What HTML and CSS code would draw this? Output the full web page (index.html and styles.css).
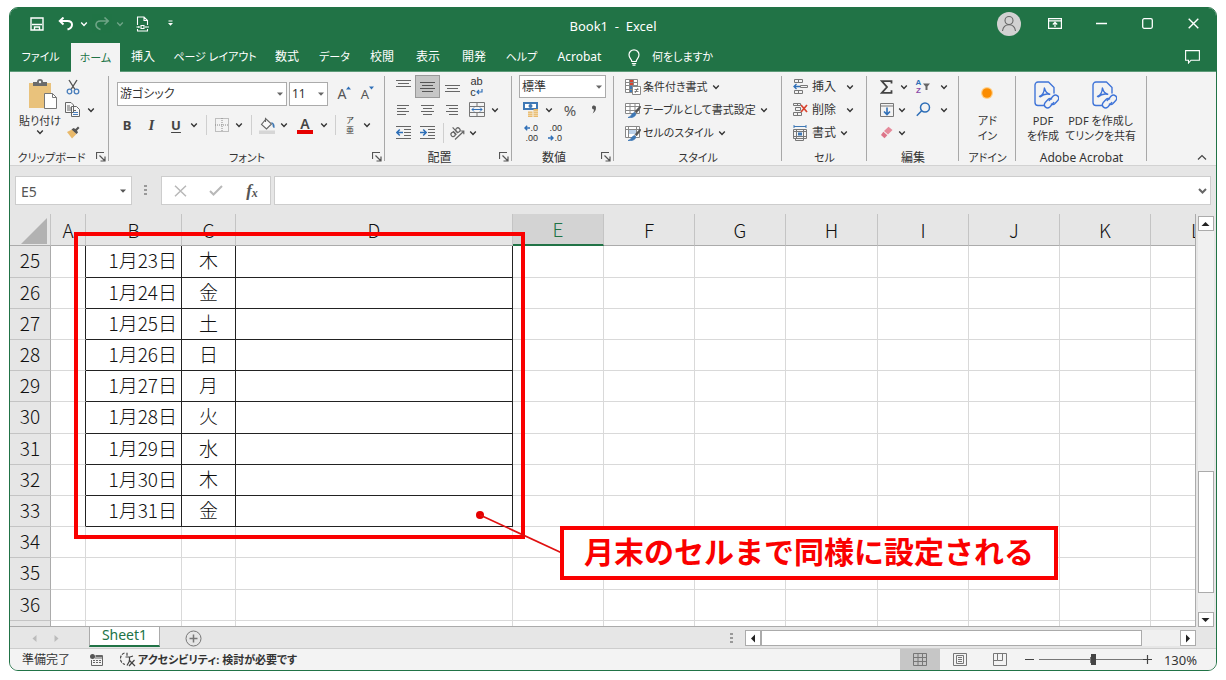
FILE: index.html
```html
<!DOCTYPE html>
<html lang="ja">
<head>
<meta charset="utf-8">
<meta name="viewport" content="width=device-width, initial-scale=1">
<title>Book1 - Excel</title>
<link rel="stylesheet" href="styles.css">
</head>
<body>
<svg class="sprite" aria-hidden="true">
  <symbol id="chev" viewBox="0 0 8 8"><path d="M1.2 2.6 4 5.4 6.8 2.6" fill="none" stroke="currentColor" stroke-width="1.4"/></symbol>
  <symbol id="tri" viewBox="0 0 8 8"><path d="M1 2.5h6L4 5.8z" fill="currentColor"/></symbol>
  <symbol id="launch" viewBox="0 0 10 10"><path d="M.5 7V.5H8M3.5 3.5l5 5M9 4.5V9H4.5" fill="none" stroke="#555" stroke-width="1.2"/></symbol>
  <symbol id="pdf" viewBox="0 0 26 30"><g fill="none" stroke="#3f74d8" stroke-width="1.400" stroke-linecap="round" stroke-linejoin="round"><path d="M9.500 24.500H4a3 3 0 0 1-3-3V4a3 3 0 0 1 3-3h10.500l5.500 5.500V12"/><path d="M5.500 15.500c3-1.200 4.700-4.500 4.900-8.500 1 3.800 3 5.700 5.300 6.200-3.500-.7-7 .3-9.200 2.500"/><path d="m15.200 19.500 4-4.500a3.200 3.200 0 0 1 4.800 4.200l-3 3.300a3.200 3.200 0 0 1-3.600.6"/><path d="m19.800 21.500-4 4.500a3.200 3.200 0 0 1-4.800-4.200l3-3.300a3.200 3.200 0 0 1 3.600-.6"/></g></symbol>
</svg>

<main class="window">
  <header class="titlebar">
    <div class="quick">
      <button aria-label="上書き保存"><svg width="14" height="14" viewBox="0 0 14 14" fill="none" stroke="#fff" stroke-width="1.400"><path d="M1 1h12v12H1zM2 7.500h10M4.500 13v-3h5v3"/></svg></button>
      <button aria-label="元に戻す"><svg width="16" height="14" viewBox="0 0 16 14" fill="none" stroke="#fff" stroke-width="2"><path d="M5.500 .5 1.800 4 5.500 7.500M2 4h7.500c3 0 4.500 1.500 4.500 3.700 0 2-1.500 3.800-4.500 4.800"/></svg></button>
      <button aria-label="元に戻す一覧"><svg class="chev"><use href="#chev"/></svg></button>
      <button class="faded" aria-label="やり直し"><svg width="16" height="14" viewBox="0 0 16 14" fill="none" stroke="#fff" stroke-width="1.600"><path d="m10.500 .5 3.700 3.500-3.700 3.500M14 4H6.500C3.500 4 2 5.500 2 7.700c0 2 1.500 3.800 4.500 4.800"/></svg></button>
      <button class="faded" aria-label="やり直し一覧"><svg class="chev"><use href="#chev"/></svg></button>
      <button class="q-wide" aria-label="PDF"><svg width="13" height="16" viewBox="0 0 13 16" fill="none" stroke="#fff" stroke-width="1.100"><path d="M1.500 9V1h6.500l3.500 3.500V9M8 1v3.500h3.500M1.500 13v2h10v-2M5 9.500h3v3H5zM.5 11h2M3 10v2M10 10v2M11 11h2"/></svg></button>
      <button class="q-more" aria-label="クイック アクセス ツール バーの設定"><svg width="7" height="7" viewBox="0 0 7 7"><path d="M1.500 1h4" stroke="#fff"/><path d="M1 3h5L3.500 5.800z" fill="#fff"/></svg></button>
    </div>
    <h1 class="doc-title">Book1&nbsp; -&nbsp; Excel</h1>
    <div class="win-buttons">
      <button class="avatar" aria-label="アカウント"><svg width="24" height="24" viewBox="0 0 24 24"><circle cx="12" cy="12" r="12" fill="#d2d2d2"/><g fill="none" stroke="#666" stroke-width="1.100"><circle cx="12" cy="8.500" r="4"/><path d="M5.500 19c.5-4 3-6.300 6.500-6.300s6 2.300 6.500 6.300"/></g></svg></button>
      <button aria-label="リボンの表示オプション"><svg width="14" height="11" viewBox="0 0 14 11" fill="none" stroke="#fff" stroke-width="1.200"><path d="M.6.6h12.800v9.800H.6zM.6 2.800h12.800M7 9V4.500M4.800 6.500 7 4.400l2.200 2.100"/></svg></button>
      <button aria-label="最小化"><svg width="11" height="11" viewBox="0 0 11 11"><path d="M0 5.500h11" stroke="#fff" stroke-width="1.300"/></svg></button>
      <button aria-label="最大化"><svg width="11" height="11" viewBox="0 0 11 11"><rect x=".7" y=".7" width="9.600" height="9.600" rx="1.500" fill="none" stroke="#fff" stroke-width="1.300"/></svg></button>
      <button aria-label="閉じる"><svg width="11" height="11" viewBox="0 0 11 11"><path d="m.7.7 9.600 9.600M10.300.7.700 10.300" stroke="#fff" stroke-width="1.400"/></svg></button>
    </div>
  </header>

  <nav class="tabs" aria-label="リボン">
    <button class="tab tab-file">ファイル</button>
    <button class="tab tab-mid active">ホーム</button>
    <button class="tab">挿入</button>
    <button class="tab tab-layout">ページ レイアウト</button>
    <button class="tab">数式</button>
    <button class="tab tab-mid">データ</button>
    <button class="tab">校閲</button>
    <button class="tab">表示</button>
    <button class="tab">開発</button>
    <button class="tab tab-mid">ヘルプ</button>
    <button class="tab tab-acro">Acrobat</button>
    <button class="tell"><svg width="12" height="17" viewBox="0 0 12 17" fill="none" stroke="#fff" stroke-width="1.200"><path d="M3.800 12.500C3.800 10 1 9.500 1 5.800a5 5 0 0 1 10 0c0 3.700-2.800 4.200-2.800 6.700zM3.800 14.500h4.400M4.500 16.200h3"/></svg>何をしますか</button>
    <button class="comment" aria-label="コメント"><svg width="15" height="14" viewBox="0 0 15 14" fill="none" stroke="#fff" stroke-width="1.100"><path d="M.6.6h13.800v9.600H6L3.500 13v-2.800H.6z"/></svg></button>
  </nav>

  <section class="ribbon">
    <div class="group g-clip">
      <div class="body">
        <button class="big paste">
          <svg width="30" height="31" viewBox="0 0 30 31"><path d="M1 4h22v25H1z" fill="#e9c27c"/><path d="M5 3h4a3 3 0 0 1 6 0h4v4H5z" fill="#6b6b6b"/><circle cx="12" cy="3" r="1.200" fill="#f3f3f3"/><path d="M16.500 14.500h8l4 4v11h-12z" fill="#fff" stroke="#777"/><path d="M24.500 14.500v4h4" fill="none" stroke="#777"/></svg>
          <span>貼り付け</span><svg class="chev"><use href="#chev"/></svg>
        </button>
        <div class="stack">
          <button aria-label="切り取り"><svg width="14" height="16" viewBox="0 0 14 16" fill="none"><path d="M3 1l6 9.500M11 1 5 10.500" stroke="#555" stroke-width="1.400"/><circle cx="3.500" cy="12.500" r="2.300" stroke="#4a7ebb" stroke-width="1.300"/><circle cx="10.500" cy="12.500" r="2.300" stroke="#4a7ebb" stroke-width="1.300"/></svg></button>
          <div class="copy"><button aria-label="コピー"><svg width="15" height="15" viewBox="0 0 15 15" fill="#f8f8f8" stroke="#666"><path d="M.5.5H6L8.500 3v7.500h-8zM6.500 4.500h5l3 3v7h-8z"/><path d="M2 4h3M2 6h4M2 8h4M8 8.500h3" fill="none"/><path d="M8 10.500h5M8 12.500h5" stroke="#4a7ebb" fill="none"/></svg></button><button aria-label="コピーのオプション"><svg class="chev"><use href="#chev"/></svg></button></div>
          <button aria-label="書式のコピー"><svg width="14" height="13" viewBox="0 0 14 13"><path d="m1 6 5-2.500 4.500 4.500L6 12.500z" fill="#e9b96a"/><path d="m5.500 3.500 2-1.500 2 1L12 .5l1.500 1.500L11 4.500l1 2-1.500 1.500z" fill="#555"/></svg></button>
        </div>
      </div>
      <div class="label">クリップボード<button class="launch" aria-label="クリップボードの設定"><svg width="10" height="10"><use href="#launch"/></svg></button></div>
    </div>

    <div class="group g-font">
      <div class="body font-body">
        <div class="font-top">
          <span class="combo combo-font"><select aria-label="フォント名"><option>游ゴシック</option></select><svg class="chev"><use href="#tri"/></svg></span>
          <span class="combo combo-size"><select aria-label="フォント サイズ"><option>11</option></select><svg class="chev"><use href="#tri"/></svg></span>
          <button class="asize" aria-label="フォント サイズの拡大">A<svg width="5" height="4" viewBox="0 0 5 4"><path d="m0 3.500 2.500-3 2.500 3z" fill="#2f6fb7"/></svg></button>
          <button class="asize small" aria-label="フォント サイズの縮小">A<svg width="5" height="4" viewBox="0 0 5 4"><path d="m0 .5 2.500 3 2.500-3z" fill="#2f6fb7"/></svg></button>
        </div>
        <div class="font-row">
          <button class="b">B</button><button class="i">I</button><button class="u">U</button><button aria-label="下線の種類"><svg class="chev"><use href="#chev"/></svg></button>
          <i class="vsep"></i>
          <button aria-label="罫線"><svg width="14" height="14" viewBox="0 0 14 14" fill="none" stroke="#888" stroke-dasharray="1 1"><path d="M.5.5h13v13H.5zM7 0v14M0 7h14"/></svg></button><button aria-label="罫線の種類"><svg class="chev"><use href="#chev"/></svg></button>
          <i class="vsep"></i>
          <button aria-label="塗りつぶしの色"><svg width="17" height="17" viewBox="0 0 17 17"><path d="m7 2 5.500 5L7.500 12 2.500 7.500zM6.500 5V.8" fill="#fafafa" stroke="#666" stroke-width="1.100"/><path d="M12 5c3 .5 4 2.500 3.500 6-1.500 0-2-1.500-2-3.500z" fill="#3f78b5"/><path d="M0 13.500h16V17H0z" fill="#d6d6d6"/></svg></button><button aria-label="塗りつぶしの色の選択"><svg class="chev"><use href="#chev"/></svg></button>
          <button class="fcolor">A</button><button aria-label="フォントの色の選択"><svg class="chev"><use href="#chev"/></svg></button>
          <i class="vsep"></i>
          <button class="ruby" aria-label="ふりがな"><span>ア</span><span>亜</span></button><button aria-label="ふりがなの設定"><svg class="chev"><use href="#chev"/></svg></button>
        </div>
      </div>
      <div class="label">フォント<button class="launch" aria-label="フォントの設定"><svg width="10" height="10"><use href="#launch"/></svg></button></div>
    </div>

    <div class="group g-align">
      <div class="body rows">
        <div class="arow">
          <button aria-label="上揃え"><svg width="15" height="14" viewBox="0 0 15 14" stroke="#666"><path d="M0 .5h15M2 3.500h11M0 6.500h15"/></svg></button>
          <button class="on" aria-label="上下中央揃え"><svg width="15" height="14" viewBox="0 0 15 14" stroke="#555"><path d="M0 2.500h15M2 5.500h11M0 8.500h15M2 11.500h11"/></svg></button>
          <button aria-label="下揃え"><svg width="15" height="14" viewBox="0 0 15 14" stroke="#666"><path d="M0 5.500h15M2 8.500h11M0 11.500h15"/></svg></button>
          <button class="wrap" aria-label="折り返して全体を表示"><span>ab</span><span>c<svg width="7" height="8" viewBox="0 0 7 8" fill="none" stroke="#2f6fb7" stroke-width="1.200"><path d="M6 2v3H1M3 3 1 5l2 2"/></svg></span></button>
        </div>
        <div class="arow">
          <button aria-label="左揃え"><svg width="12" height="11" viewBox="0 0 12 11" stroke="#666"><path d="M0 1.500h12M0 4.500h9M0 7.500h12M0 10.500h9"/></svg></button>
          <button aria-label="中央揃え"><svg width="13" height="11" viewBox="0 0 13 11" stroke="#666"><path d="M0 1.500h13M2 4.500h9M0 7.500h13M2 10.500h9"/></svg></button>
          <button aria-label="右揃え"><svg width="12" height="11" viewBox="0 0 12 11" stroke="#666"><path d="M0 1.500h12M3 4.500h9M0 7.500h12M3 10.500h9"/></svg></button>
          <button aria-label="セルを結合して中央揃え"><svg width="16" height="15" viewBox="0 0 16 15" fill="none" stroke="#777"><path d="M.5.500h15v14H.5zM.5 4.500h15M.5 10.500h15M8 .5v4M8 10.500v4"/><path d="M3 7.500h10M5 5.500l-2 2 2 2M11 5.500l2 2-2 2" stroke="#2f6fb7"/></svg></button>
          <button aria-label="結合の種類"><svg class="chev"><use href="#chev"/></svg></button>
        </div>
        <div class="arow indent">
          <button aria-label="インデントを減らす"><svg width="15" height="13" viewBox="0 0 15 13" stroke="#666" fill="none"><path d="M0 .5h15M8 3.500h7M8 6.500h7M8 9.500h7M0 12.500h15"/><path d="M7 6.500H1M3.800 3.500l-3 3 3 3" stroke="#2f6fb7" stroke-width="1.500"/></svg></button>
          <button aria-label="インデントを増やす"><svg width="15" height="13" viewBox="0 0 15 13" stroke="#666" fill="none"><path d="M0 .5h15M8 3.500h7M8 6.500h7M8 9.500h7M0 12.500h15"/><path d="M0 6.500h6M3.200 3.500l3 3-3 3" stroke="#2f6fb7" stroke-width="1.500"/></svg></button>
          <i class="vsep"></i>
          <button aria-label="方向"><svg width="16" height="14" viewBox="0 0 16 14" fill="none" stroke="#666" stroke-width="1.200"><g transform="rotate(-42 6 6)"><ellipse cx="3" cy="6.500" rx="2.100" ry="2.200"/><path d="M5.200 4v5M7.300 1v7.800"/><ellipse cx="9.500" cy="6.500" rx="2.100" ry="2.200"/></g><path d="M6 13.500 14.500 5.500M11.500 5h3.300v3.300"/></svg></button>
          <button aria-label="方向の種類"><svg class="chev"><use href="#chev"/></svg></button>
        </div>
      </div>
      <div class="label">配置<button class="launch" aria-label="配置の設定"><svg width="10" height="10"><use href="#launch"/></svg></button></div>
    </div>

    <div class="group g-num">
      <div class="body rows">
        <span class="combo combo-num"><select aria-label="数値の書式"><option>標準</option></select><svg class="chev"><use href="#tri"/></svg></span>
        <div class="nrow">
          <button aria-label="通貨表示形式"><svg width="16" height="15" viewBox="0 0 16 15"><path d="M0 0h15v8H0z" fill="#3f78b5"/><path d="M2 2h11v4H2z" fill="#fff"/><circle cx="7.500" cy="4" r="2" fill="#3f78b5"/><g fill="#e9b96a"><path d="M5 9.500h4.500V15H5zM10.500 7H15v8h-4.500z"/></g><path d="M5 11.300h10M5 13.300h10M10.500 9.300H15" stroke="#f6e6c8" stroke-width=".8"/></svg></button>
          <button aria-label="通貨の種類"><svg class="chev"><use href="#chev"/></svg></button>
          <button class="pct">%</button><button class="comma" aria-label="桁区切りスタイル"><svg width="6" height="9" viewBox="0 0 6 9"><path d="M1 2.500C1 1 2 .5 3 .5s2 .8 2 2.200C5 5.500 3.500 7.500 1.500 8.500c1-1.500 1.400-2.500 1.400-4C1.800 4.500 1 3.800 1 2.500z" fill="#555"/></svg></button>
        </div>
        <div class="nrow">
          <button class="dec" aria-label="小数点以下の表示桁数を増やす"><span><svg width="6" height="6" viewBox="0 0 6 6" fill="none" stroke="#2f6fb7" stroke-width="1.400"><path d="M6 3H1M3.200.8 1 3l2.200 2.200"/></svg>.0</span><span>.00</span></button>
          <button class="dec second" aria-label="小数点以下の表示桁数を減らす"><span>.00</span><span><svg width="6" height="6" viewBox="0 0 6 6" fill="none" stroke="#2f6fb7" stroke-width="1.400"><path d="M0 3h5M2.800.8 5 3 2.800 5.200"/></svg>.0</span></button>
        </div>
      </div>
      <div class="label">数値<button class="launch" aria-label="数値の設定"><svg width="10" height="10"><use href="#launch"/></svg></button></div>
    </div>

    <div class="group g-style">
      <div class="body rows">
        <button class="cmd"><svg width="16" height="16" viewBox="0 0 16 16" fill="none" stroke="#888"><path d="M.5.5h12v13H.5z" fill="#fff"/><path d="M4.500.5v13M8.500.5v13M.5 3.500h12M.5 6.500h12M.5 10.500h12"/><path d="M5 1h3v2H5zM5 4h3v2H5z" fill="#d8432f" stroke="none"/><path d="M5 7h3v3H5zM5 11h2v2H5z" fill="#3f78b5" stroke="none"/><path d="M7.500 7.500h8v8h-8z" fill="#fff"/><path d="M9.500 10.500h4M9.500 12.500h4M13 9l-3 5" stroke="#666" stroke-width=".8"/></svg><span>条件付き書式</span><svg class="chev"><use href="#chev"/></svg></button>
        <button class="cmd"><svg width="16" height="16" viewBox="0 0 16 16" fill="none" stroke="#888"><path d="M.5 1.500h14v10H.5z" fill="#fff"/><path d="M.5 4.500h14M.5 8.500h14M5 1.500v10M10 1.500v10"/><path d="M10 9.500 15 4l1 1-4.500 6z" fill="#555" stroke="#555" stroke-width=".6"/><path d="M3 15.500c3 0 3-4 6.500-5l1.500 1.500c-1 3-4 4-8 3.500z" fill="#3f78b5" stroke="#3f78b5" stroke-width=".8"/></svg><span>テーブルとして書式設定</span><svg class="chev"><use href="#chev"/></svg></button>
        <button class="cmd"><svg width="16" height="16" viewBox="0 0 16 16" fill="none" stroke="#888"><path d="M.5 1.500h14v11H.5z" fill="#fff"/><path d="M4 5h7v4H4z" fill="#bcd2ea" stroke="none"/><path d="M.5 4.500h14M3.500 1.500v11M11.500 1.500v7"/><path d="M10 9.500 15 4l1 1-4.500 6z" fill="#555" stroke="#555" stroke-width=".6"/><path d="M3 15.500c3 0 3-4 6.500-5l1.500 1.500c-1 3-4 4-8 3.500z" fill="#3f78b5" stroke="#3f78b5" stroke-width=".8"/></svg><span>セルのスタイル</span><svg class="chev"><use href="#chev"/></svg></button>
      </div>
      <div class="label">スタイル</div>
    </div>

    <div class="group g-cell">
      <div class="body rows">
        <button class="cmd wide"><svg width="15" height="15" viewBox="0 0 15 15" fill="none" stroke="#777"><path d="M1.500.5h8v3h-8zM5.500.5v3M1.500 11.500h8v3h-8zM5.500 11.500v3M7.500 6.500h7v2h-7z"/><path d="M7 7.500H1M3.500 5 1 7.500 3.500 10" stroke="#2f6fb7" stroke-width="1.300"/></svg><span>挿入</span><svg class="chev"><use href="#chev"/></svg></button>
        <button class="cmd wide"><svg width="15" height="15" viewBox="0 0 15 15" fill="none" stroke="#777"><path d="M.5 1.500h7v2h-7zM4.500 1.500v2M2.500 5.500h5v3h-5zM.5 10.500h8v3h-8zM4.500 10.500v3"/><path d="m8 3 6 7M14 3l-6 7" stroke="#d8432f" stroke-width="1.700"/></svg><span>削除</span><svg class="chev"><use href="#chev"/></svg></button>
        <button class="cmd"><svg width="15" height="16" viewBox="0 0 15 16" fill="none" stroke="#777"><path d="M.5 4.500h13v9H.5zM3.500 4.500v9M10.500 4.500v9M.5 6.500h13M.5 11.500h13M2.500 13.500v2h8v-2"/><path d="M5 7.500h4v3H5z" fill="#3f78b5" stroke="none"/><path d="M1 1.500h12M1 0v3M13 0v3" stroke="#3f78b5"/></svg><span>書式</span><svg class="chev"><use href="#chev"/></svg></button>
      </div>
      <div class="label">セル</div>
    </div>

    <div class="group g-edit">
      <div class="body rows">
        <div class="erow"><button aria-label="合計"><svg width="13" height="14" viewBox="0 0 13 14" fill="none" stroke="#444" stroke-width="1.800"><path d="M11.500 3.500V1.200H1.800L7 7l-5.200 5.800h9.700v-2.500"/></svg></button><button class="far" aria-label="集計方法"><svg class="chev"><use href="#chev"/></svg></button><button class="sort" aria-label="並べ替えとフィルター"><span class="az"><span>A</span><span>Z</span></span><svg width="7" height="7" viewBox="0 0 7 7"><path d="M0 .5h7L4.500 3.500V7h-2V3.500z" fill="#666"/></svg></button><button aria-label="並べ替えの種類"><svg class="chev"><use href="#chev"/></svg></button></div>
        <div class="erow"><button aria-label="フィル"><svg width="14" height="14" viewBox="0 0 14 14" fill="none"><path d="M.5.500h13v13H.5zM.5 3h13" stroke="#777"/><path d="M7 4.500v7M4 8.500l3 3 3-3" stroke="#2f6fb7" stroke-width="1.600"/></svg></button><button aria-label="フィルの種類"><svg class="chev"><use href="#chev"/></svg></button><button class="find" aria-label="検索と選択"><svg width="15" height="15" viewBox="0 0 15 15" fill="none" stroke="#2f6fb7" stroke-width="1.500"><circle cx="9" cy="5.500" r="4.500"/><path d="M5.700 8.800.8 13.800"/></svg></button><button aria-label="検索の種類"><svg class="chev"><use href="#chev"/></svg></button></div>
        <div class="erow"><button aria-label="クリア"><svg width="13" height="13" viewBox="0 0 13 13"><path d="m4 5 4.500-4.300L12.500 4 8 8.500z" fill="#e58a9a"/><path d="M3.300 5.700 7.300 9.200 4.500 12.200 1 9z" fill="#dd7488"/></svg></button><button aria-label="クリアの種類"><svg class="chev"><use href="#chev"/></svg></button></div>
      </div>
      <div class="label">編集</div>
    </div>

    <div class="group g-addin">
      <div class="body"><button class="big"><svg width="34" height="31" viewBox="0 0 34 31"><circle cx="16" cy="14" r="6" fill="#ffd08a"/><circle cx="16" cy="14" r="4.800" fill="#fb8c00"/></svg><span>アド<br>イン</span></button></div>
      <div class="label">アドイン</div>
    </div>

    <div class="group g-acro">
      <div class="body">
        <button class="big"><svg width="26" height="31" viewBox="-1 -2 26 31"><use href="#pdf" width="26" height="30"/></svg><span>PDF<br>を作成</span></button>
        <button class="big"><svg width="26" height="31" viewBox="-1 -2 26 31"><use href="#pdf" width="26" height="30"/></svg><span>PDF を作成し<br>てリンクを共有</span></button>
      </div>
      <div class="label">Adobe Acrobat</div>
    </div>
    <button class="collapse" aria-label="リボンを折りたたむ"><svg width="10" height="7" viewBox="0 0 10 7"><path d="m1 5.500 4-4 4 4" fill="none" stroke="#444" stroke-width="1.200"/></svg></button>
  </section>

  <section class="formula">
    <span class="namebox"><input aria-label="名前ボックス" value="E5"><svg class="chev"><use href="#tri"/></svg></span>
    <i class="dots"></i>
    <span class="fx">
      <button aria-label="キャンセル"><svg width="13" height="12" viewBox="0 0 13 12"><path d="m1 .8 11 10.400M12 .8 1 11.200" stroke="#b8b8b8" stroke-width="1.500"/></svg></button>
      <button aria-label="入力"><svg width="14" height="11" viewBox="0 0 14 11"><path d="m1 6 3.500 3.500L13 1" fill="none" stroke="#b8b8b8" stroke-width="2"/></svg></button>
      <button class="fxb" aria-label="関数の挿入">f<small>x</small></button>
    </span>
    <span class="finput"><input aria-label="数式バー"><svg width="9" height="8" viewBox="0 0 9 8"><path d="m1 2 3.500 3.500L8 2" fill="none" stroke="#666" stroke-width="2"/></svg></span>
  </section>

  <section class="sheet">
    <div class="cells">
      <table>
        <colgroup><col class="c-head"><col class="c-a"><col class="c-b"><col class="c-c"><col class="c-d"><col class="c-n"><col class="c-n"><col class="c-n"><col class="c-h"><col class="c-n"><col class="c-n"><col class="c-n"><col class="c-n"></colgroup>
        <thead><tr><th class="corner"><svg width="26" height="26" viewBox="0 0 26 26"><path d="M26 0v26H0z" fill="#b2b2b2"/></svg></th><th>A</th><th>B</th><th>C</th><th>D</th><th class="sel">E</th><th>F</th><th>G</th><th>H</th><th>I</th><th>J</th><th>K</th><th>L</th></tr></thead>
        <tbody>
          <tr class="day"><th>25</th><td></td><td>1月23日</td><td>木</td><td></td><td></td><td></td><td></td><td></td><td></td><td></td><td></td><td></td></tr>
          <tr class="day"><th>26</th><td></td><td>1月24日</td><td>金</td><td></td><td></td><td></td><td></td><td></td><td></td><td></td><td></td><td></td></tr>
          <tr class="day"><th>27</th><td></td><td>1月25日</td><td>土</td><td></td><td></td><td></td><td></td><td></td><td></td><td></td><td></td><td></td></tr>
          <tr class="day"><th>28</th><td></td><td>1月26日</td><td>日</td><td></td><td></td><td></td><td></td><td></td><td></td><td></td><td></td><td></td></tr>
          <tr class="day"><th>29</th><td></td><td>1月27日</td><td>月</td><td></td><td></td><td></td><td></td><td></td><td></td><td></td><td></td><td></td></tr>
          <tr class="day"><th>30</th><td></td><td>1月28日</td><td>火</td><td></td><td></td><td></td><td></td><td></td><td></td><td></td><td></td><td></td></tr>
          <tr class="day"><th>31</th><td></td><td>1月29日</td><td>水</td><td></td><td></td><td></td><td></td><td></td><td></td><td></td><td></td><td></td></tr>
          <tr class="day"><th>32</th><td></td><td>1月30日</td><td>木</td><td></td><td></td><td></td><td></td><td></td><td></td><td></td><td></td><td></td></tr>
          <tr class="day"><th>33</th><td></td><td>1月31日</td><td>金</td><td></td><td></td><td></td><td></td><td></td><td></td><td></td><td></td><td></td></tr>
          <tr><th>34</th><td></td><td></td><td></td><td></td><td></td><td></td><td></td><td></td><td></td><td></td><td></td><td></td></tr>
          <tr><th>35</th><td></td><td></td><td></td><td></td><td></td><td></td><td></td><td></td><td></td><td></td><td></td><td></td></tr>
          <tr><th>36</th><td></td><td></td><td></td><td></td><td></td><td></td><td></td><td></td><td></td><td></td><td></td><td></td></tr>
          <tr><th></th><td></td><td></td><td></td><td></td><td></td><td></td><td></td><td></td><td></td><td></td><td></td><td></td></tr>
        </tbody>
      </table>
    </div>
    <div class="vscroll">
      <button aria-label="上へスクロール"><svg width="9" height="6" viewBox="0 0 9 6"><path d="M.5 5h8L4.500 1z" fill="#222"/></svg></button>
      <div class="vtrack"><div class="vthumb"></div></div>
      <button aria-label="下へスクロール"><svg width="9" height="6" viewBox="0 0 9 6"><path d="M.5 1h8l-4 4z" fill="#222"/></svg></button>
    </div>
    <div class="frame"></div>
    <svg class="leader" width="90" height="45" viewBox="0 0 90 45"><circle cx="5" cy="5" r="4" fill="#e60000"/><path d="M5 5 87 43" stroke="#e01010" stroke-width="1.700"/></svg>
    <p class="callout">月末のセルまで同様に設定される</p>
  </section>

  <section class="sheetbar">
    <button class="nav-prev" aria-label="前のシート"><svg width="5" height="7" viewBox="0 0 5 7"><path d="M4.500 0v7L.5 3.500z" fill="#bbb"/></svg></button>
    <button class="nav-next" aria-label="次のシート"><svg width="5" height="7" viewBox="0 0 5 7"><path d="M.5 0v7l4-3.500z" fill="#bbb"/></svg></button>
    <button class="sheet-tab">Sheet1</button>
    <button class="add" aria-label="新しいシート"><svg width="17" height="17" viewBox="0 0 17 17" fill="none" stroke="#777"><circle cx="8.500" cy="8.500" r="7.500"/><path d="M8.500 4.500v8M4.500 8.500h8" stroke-width="1.500"/></svg></button>
    <i class="dots bar-dots"></i>
    <div class="hscroll">
      <button aria-label="左へスクロール"><svg width="6" height="9" viewBox="0 0 6 9"><path d="M5 .5v8L1 4.500z" fill="#222"/></svg></button>
      <div class="htrack"><div class="hthumb"></div></div>
      <button aria-label="右へスクロール"><svg width="6" height="9" viewBox="0 0 6 9"><path d="M1 .5v8l4-4z" fill="#222"/></svg></button>
    </div>
  </section>

  <footer class="status">
    <span class="ready">準備完了</span>
    <svg width="13" height="12" viewBox="0 0 13 12" fill="none" stroke="#666"><path d="M5.500 1.500h7v10H1.500V6M5 4h8M5.500 2.500h7"/><path d="M3 6.500h2M6 6.500h2M9 6.500h2M3 8.500h2M6 8.500h2M9 8.500h2"/><circle cx="2.500" cy="2.500" r="2.500" fill="#555" stroke="none"/></svg>
    <button class="a11y"><svg width="16" height="15" viewBox="0 0 16 15" fill="none" stroke="#444" stroke-width="1.200"><path d="M4.500 1A6 6 0 0 0 5 12.500" stroke-dasharray="3 1.200"/><path d="M7 .8v3M5.500 5h4.500l3-1M9.500 5v4l-2.500 4.500"/><path d="m9 8 6 6M14.500 8 9 14"/></svg>アクセシビリティ: 検討が必要です</button>
    <div class="views">
      <button class="on" aria-label="標準"><svg width="14" height="13" viewBox="0 0 14 13" fill="none" stroke="#777"><path d="M.5.5h13v12H.5zM.5 4.500h13M.5 8.500h13M5 .5v12M9.500.5v12"/></svg></button>
      <button aria-label="ページ レイアウト"><svg width="14" height="13" viewBox="0 0 14 13" fill="none" stroke="#777"><path d="M.5.5h13v12H.5zM3.500 2.500h7v8h-7zM5 4.500h4M5 6.500h4M5 8.500h4"/></svg></button>
      <button aria-label="改ページ プレビュー"><svg width="14" height="13" viewBox="0 0 14 13" fill="none" stroke="#777"><path d="M.5.5h13v12H.5zM4.500.5v7h5v-7M.5 7.500h4"/></svg></button>
    </div>
    <button class="zoom-btn" aria-label="縮小"><svg width="9" height="9" viewBox="0 0 9 9"><path d="M0 4.500h9" stroke="#444" stroke-width="1.200"/></svg></button>
    <input class="zoom" type="range" min="0" max="100" value="53" aria-label="ズーム">
    <button class="zoom-btn" aria-label="拡大"><svg width="9" height="9" viewBox="0 0 9 9"><path d="M0 4.500h9M4.500 0v9" stroke="#444" stroke-width="1.200"/></svg></button>
    <span class="pctv">130%</span>
  </footer>
</main>
</body>
</html>
```
FILE: styles.css
```css
* { box-sizing: border-box; }
body {
  margin: 0;
  height: 100vh;
  padding: 7px 9px 9px;
  display: flex;
  background: #fff;
  color: #333;
  font: 12px/16px "Noto Sans", "Noto Sans CJK JP", sans-serif;
  font-feature-settings: "palt";
}
button {
  display: flex; align-items: center; justify-content: center;
  padding: 0; border: 0; background: none; color: inherit;
  font: inherit; font-feature-settings: inherit; white-space: nowrap;
}
select, input { font: inherit; color: inherit; font-feature-settings: inherit; }
svg { flex: none; display: block; }
.sprite { position: absolute; width: 0; height: 0; }
.chev { width: 8px; height: 8px; }

.window {
  flex: 1; min-width: 0;
  display: flex; flex-direction: column;
  border: 1px solid #217346; border-radius: 9px;
  overflow: hidden; background: #e6e6e6;
}

/* title bar */
.titlebar {
  display: grid; grid-template-columns: 1fr auto 1fr; align-items: center;
  height: 35px; flex: none; background: #217346; color: #fff;
}
.quick { display: flex; align-items: center; padding: 0 0 4px 20px; gap: 6px; }
.quick button:first-child { margin-right: 8px; }
.quick .q-wide { margin-left: 6px; }
.quick .q-more { margin-left: 12px; }
.faded { opacity: .35; }
.doc-title { margin: 0; font-size: 13px; font-weight: 400; }
.win-buttons { display: flex; justify-content: flex-end; padding-bottom: 4px; }
.win-buttons button { width: 46px; }

/* ribbon tabs */
.tabs { display: flex; height: 29px; flex: none; background: #217346; color: #fff; border-bottom: 1px solid #5c9a78; }
.tab { width: 46px; font-size: 12px; }
.tab-file { width: 61px; font-size: 11px; }
.tab-mid { width: 49px; font-size: 11px; }
.tab-layout { width: 98px; font-size: 11px; }
.tab-acro { width: 67px; }
.active { background: #f3f3f3; color: #217346; height: 29px; }
.tell { gap: 12px; margin-left: 15px; font-size: 11px; }
.comment { margin-left: auto; width: 48px; }

/* ribbon */
.ribbon { display: flex; height: 94px; flex: none; padding-top: 3px; background: #f3f3f3; border-bottom: 1px solid #d2d2d2; }
.group { position: relative; flex: none; display: flex; flex-direction: column; background: linear-gradient(#a8a8a8, #a8a8a8) right 1px / 1px 85px no-repeat; }
.body { display: flex; height: 72px; flex: none; }
.rows { flex-direction: column; }
.rows > * { height: 23px; flex: none; }
.label { display: flex; align-items: center; justify-content: center; height: 18px; padding-top: 3px; font-size: 11px; }
.launch { position: absolute; right: 3px; bottom: 3px; }
.vsep { width: 1px; height: 20px; background: #cfcfcf; justify-self: center; }
.big { flex-direction: column; justify-content: flex-start; line-height: 15px; font-size: 11px; padding-top: 4px; text-align: center; }
.big span { padding-top: 3px; }

.g-clip { width: 99px; }
.g-clip .body { padding-left: 8px; gap: 3px; }
.g-clip .label { padding-right: 16px; }
.paste { width: 44px; }
.paste > svg:first-child { margin-left: 6px; }
.stack { display: flex; flex-direction: column; align-items: flex-start; }
.stack > * { height: 23px; min-width: 16px; }
.copy { display: flex; align-items: center; gap: 7px; }

.g-font { width: 276px; }
.font-body { flex-direction: column; }
.font-top { display: flex; align-items: center; padding: 7px 0 0 8px; gap: 2px; }
.combo { position: relative; display: flex; }
.combo select { appearance: none; width: 100%; height: 24px; margin: 0; padding: 0 2px; border: 1px solid #ababab; border-radius: 0; background: #fff; font-size: 12px; }
.combo .chev { position: absolute; right: 3px; top: 8px; pointer-events: none; color: #666; }
.combo-font { width: 170px; }
.combo-size { width: 39px; }
.combo-num { width: 87px; margin-left: 7px; }
.combo-num select { height: 23px; }
.asize { width: 21px; margin-left: 4px; font-size: 14px; color: #555; align-items: center; }
.asize.small { font-size: 13px; margin-left: 0; }
.asize svg { align-self: flex-start; }
.font-row {
  display: grid; align-items: center; height: 30px; margin-top: 4px; padding-left: 6px;
  grid-template-columns: 24px 25px 24px 12px 12px 20px 14px 10px 22px 12px 30px 8px 14px 16px 18px;
}
.b, .i, .u { font-weight: 700; font-size: 13px; color: #444; }
.i { font-family: "Liberation Serif", serif; font-style: italic; font-size: 15px; }
.u { text-decoration: underline; text-underline-offset: 2px; }
.font-row .fcolor { width: 16px; height: 17px; justify-self: center; border-bottom: 4px solid #e60000; font-weight: 600; font-size: 14px; line-height: 13px; color: #444; }
.ruby { flex-direction: column; font-size: 8px; line-height: 10px; }

.g-align { width: 127px; }
.g-align .body { padding-left: 6px; }
.arow { display: grid; grid-template-columns: 24px 25px 24px 25px 12px; align-items: center; }
.arow.indent { grid-template-columns: 24px 25px 6px 22px 10px; }
.on { background: #c6c6c6; }
.arow .on { height: 23px; border: 1px solid #999; }
.wrap { flex-direction: column; font: 11px/11px "Liberation Sans", sans-serif; }
.wrap span { display: flex; }
.g-align .label, .g-num .label { padding-right: 18px; }
.g-align .label, .g-num .label, .g-edit .label { font-size: 12px; }

.g-num { width: 102px; }
.nrow { display: grid; grid-template-columns: 26px 10px 32px 16px; align-items: center; padding-left: 6px; }
.nrow + .nrow { grid-template-columns: 26px 22px; }
.pct { font-size: 15px; color: #555; }
.dec { flex-direction: column; align-items: flex-end; padding-right: 6px; font: 9px/10px "Liberation Sans", sans-serif; }
.dec.second { padding-right: 4px; }
.dec span { display: flex; align-items: center; }

.g-style { width: 168px; }
.g-style .body { padding-left: 11px; }
.cmd { justify-content: flex-start; gap: 2px; font-size: 11px; }
.cmd .chev { margin-left: 2px; }
.g-cell { width: 85px; }
.g-cell .body { padding-left: 11px; }
.g-cell .cmd { font-size: 12px; gap: 4px; }
.g-cell .cmd .chev { margin-left: 0; }
.g-cell .wide .chev { margin-left: 6px; }

.g-edit { width: 92px; }
.g-edit .body { padding-left: 9px; }
.erow { display: grid; grid-template-columns: 21px 9px 34px 8px; align-items: center; }
.erow .far { padding-left: 4px; }
.sort { gap: 2px; }
.az { font: 700 8px/8px "Liberation Sans", sans-serif; color: #2f6fb7; }
.az span { display: block; }
.az span + span { color: #8a4aa8; }
.g-addin { width: 57px; }
.g-addin .body, .g-acro .body { justify-content: center; }
.g-acro { width: 131px; }
.g-acro .body { gap: 6px; }
.g-acro .big svg { margin-left: 6px; }
.g-acro .label { font-size: 12px; }
.collapse { margin-left: auto; align-self: flex-end; width: 29px; height: 16px; }

/* formula bar */
.formula { display: flex; height: 48px; flex: none; padding: 10px 5px 9px; }
.formula input { border: 0; outline: 0; background: none; min-width: 0; }
.namebox, .fx, .finput { display: flex; align-items: center; background: #fff; border: 1px solid #cdcdcd; }
.namebox { width: 117px; padding-right: 4px; color: #555; }
.namebox input { flex: 1; padding: 2px 0 0 5px; font-size: 14px; }
.dots { width: 3px; height: 11px; margin: 9px 14px 0 12px; background: repeating-linear-gradient(#999 0 2px, transparent 2px 4px); }
.fx { width: 110px; }
.fx button { flex: 1; }
.formula .fxb { font: italic 700 17px/20px "Liberation Serif", serif; color: #555; }
.fxb small { font-size: 12px; padding-top: 4px; }
.finput { flex: 1; margin-left: 3px; padding-right: 3px; }
.finput input { flex: 1; }

/* worksheet */
.sheet { position: relative; flex: 1; min-height: 0; display: flex; }
.cells { flex: 1; min-width: 0; overflow: hidden; border-right: 1px solid #ababab; border-bottom: 1px solid #ababab; background: #fff; }
table { table-layout: fixed; width: 1232px; border-collapse: separate; border-spacing: 0; font: 300 19px/24px "Noto Sans CJK JP", sans-serif; font-feature-settings: normal; color: #111; }
.c-head { width: 41px; }
.c-a { width: 35px; }
.c-b { width: 96px; }
.c-c { width: 54px; }
.c-d { width: 277px; }
.c-n { width: 91px; }
.c-h { width: 92px; }
th, td { padding: 0 0 3px; font-weight: 300; border-right: 1px solid #d9d9d9; border-bottom: 1px solid #d9d9d9; text-align: center; height: 31px; }
tbody tr:nth-child(5n + 1) > * { height: 32px; }
th { background: #e6e6e6; }
thead th { height: 32px; padding: 0; border-right-color: #c4c4c4; border-bottom-color: #ababab; }
tbody th { border-right-color: #ababab; border-bottom-color: #c4c4c4; }
.corner svg { margin: 3px 3px 0 auto; }
.sel { background: #d3d3d3; color: #217346; border-bottom: 2px solid #217346; }
.day td:nth-child(2) { border-right-color: #222; }
.day td:nth-child(3), .day td:nth-child(4), .day td:nth-child(5) { border-right-color: #222; border-bottom-color: #222; }
.day td:nth-child(3) { text-align: right; padding-right: 4px; }

.vscroll { width: 20px; display: flex; flex-direction: column; align-items: center; padding: 2px 2px 0 1px; }
.vscroll button, .hscroll button { width: 16px; height: 15px; background: #fff; border: 1px solid #ababab; }
.vtrack { flex: 1; width: 16px; background: #f0f0f0; padding-top: 240px; }
.vthumb { height: 122px; background: #fff; border: 1px solid #ababab; }

/* annotation over the worksheet */
.frame { position: absolute; left: 64px; top: 18px; width: 451px; height: 307px; border: 4px solid #fa0000; }
.leader { position: absolute; left: 465px; top: 296px; }
.callout { position: absolute; left: 550px; top: 312px; width: 498px; height: 54px; margin: 0; border: 4px solid #fa0000; background: #fff; color: #fa0000; font: 700 30px/40px "Noto Sans CJK JP", sans-serif; font-feature-settings: normal; text-align: center; white-space: nowrap; }

/* sheet tabs */
.sheetbar { display: flex; align-items: flex-start; height: 22px; flex: none; padding-right: 20px; border-bottom: 1px solid #cdcdcd; }
.nav-prev, .nav-next { width: 22px; height: 22px; }
.nav-prev { margin-left: 13px; }
.sheet-tab { width: 71px; height: 20px; margin-left: 22px; background: #fff; border: 1px solid #ababab; border-top: 0; border-bottom: 2px solid #217346; color: #217346; font-size: 14px; line-height: 16px; padding-bottom: 2px; }
.add { margin: 3px 0 0 25px; }
.bar-dots { margin: 6px 12px 0 auto; }
.hscroll { display: flex; width: 451px; padding-top: 3px; }
.hscroll button { height: 16px; flex: none; }
.htrack { flex: 1; height: 16px; padding-right: 38px; background: #f0f0f0; }
.hthumb { height: 16px; background: #fff; border: 1px solid #ababab; }

/* status bar */
.status { display: flex; align-items: center; height: 21px; flex: none; padding: 0 19px 0 12px; background: #f3f3f3; }
.ready { margin-right: 20px; }
.a11y { margin-left: 17px; gap: 2px; font-weight: 700; font-size: 11px; }
.views { display: flex; align-self: stretch; margin-left: auto; margin-right: 5px; }
.views button { width: 40px; }
.zoom-btn { width: 9px; height: 16px; }
.zoom { appearance: none; width: 104px; height: 12px; margin: 0 0 0 5px; background: linear-gradient(#777, #777) center / 100% 1px no-repeat, linear-gradient(#777, #777) center / 1px 6px no-repeat; }
.zoom::-webkit-slider-thumb { appearance: none; width: 5px; height: 11px; background: #444; }
.pctv { margin-left: 12px; font-size: 13px; }
```
